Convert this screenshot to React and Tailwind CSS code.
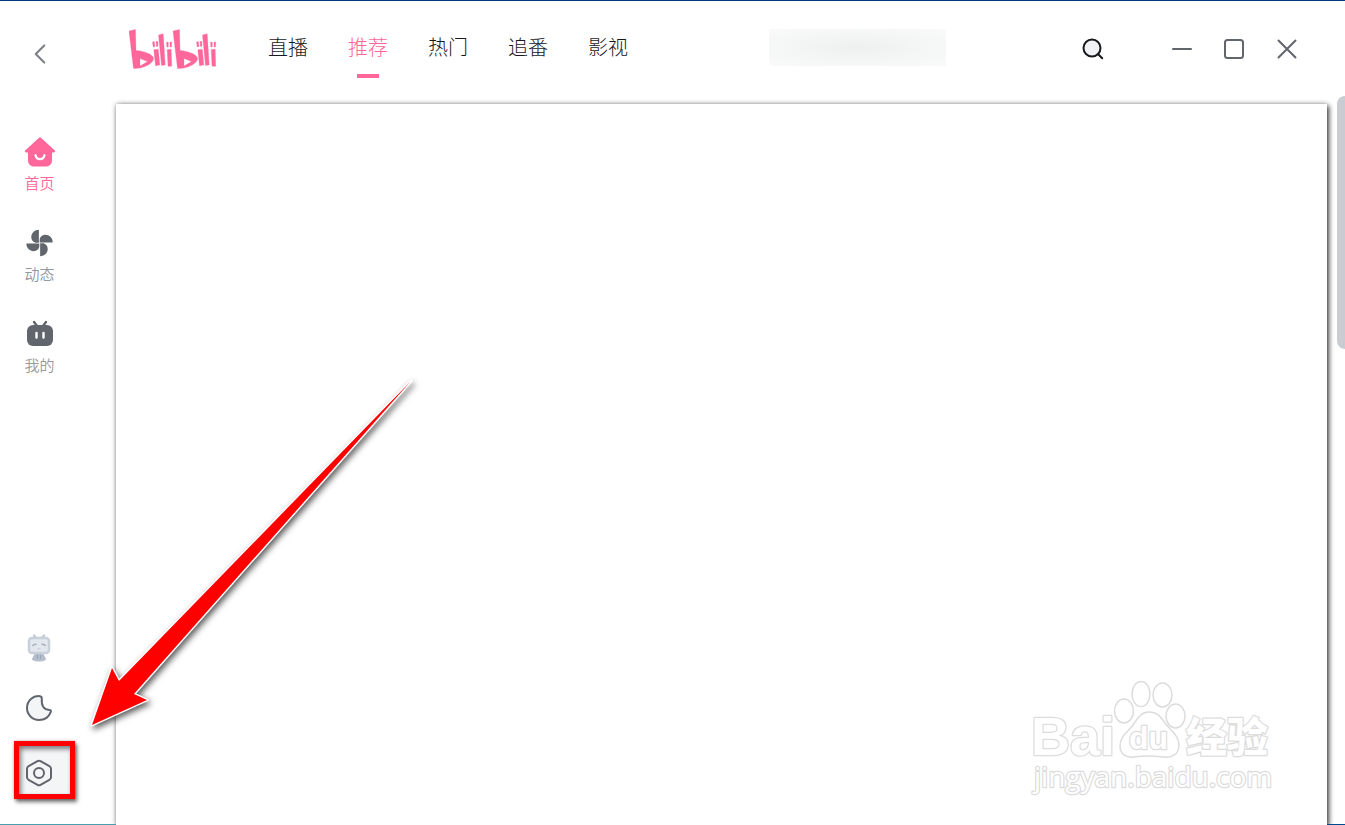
import { useState } from 'react';
import { ChevronLeft } from 'lucide-react';

const TABS = ['直播', '推荐', '热门', '追番', '影视'];

// one half of the wordmark, drawn twice side by side
function LogoHalf() {
  return (
    <g>
      <path
        fillRule="evenodd"
        d="M0 2 6.500 .5 7 21.500C15 22 24.500 25.500 24.500 29.500 24.500 35 13 40 4.500 39.500ZM11 29.500V37L18.500 32.500Z"
      />
      <path d="M23.500 13l1.800-.5.7 5-1.800.4zM27 12.500l1.800-.3.2 5.100-1.600.3z" />
      <path d="M24.800 20.700l4.500-.5 1.500 15.800-4.300.8z" />
      <path d="M29.500 6l4.700-1.200L36.200 36l-3.700.5z" />
      <path d="M37.500 13.200l1.800-.2v5l-1.500.1zM41 13l1.800.1-.3 5-1.500-.1z" />
      <path d="M38.200 20.500l4-.2.5 17-3.700-.1z" />
    </g>
  );
}

function Logo() {
  return (
    <svg
      viewBox="0 0 88 40"
      className="w-[88px] h-10 text-[#ff6699]"
      fill="currentColor"
      stroke="currentColor"
      strokeWidth="0.3"
      role="img"
      aria-label="bilibili"
    >
      <LogoHalf />
      <g transform="translate(44 0)">
        <LogoHalf />
      </g>
    </svg>
  );
}

function HomeIcon() {
  return (
    <svg viewBox="0 0 32 30" className="w-8 h-[30px]" fill="currentColor">
      <path d="M14.500 1.300a2.200 2.200 0 0 1 3 0L30.600 13.200c1 .9.500 2.300-.8 2.300H28V23c0 4-2.300 6.500-6.300 6.500H10.300C6.300 29.500 4 27 4 23v-7.500H2.200c-1.300 0-1.800-1.400-.8-2.300z" />
      <path d="M11.500 18c.4 2.700 2.100 4.200 4.500 4.200s4.100-1.500 4.500-4.200" fill="none" stroke="#fff" strokeWidth="2.200" strokeLinecap="round" />
    </svg>
  );
}

const BLADE = 'M12.900.3C8.500.3 5.300 3.600 5.300 7.500c0 3.200 2.200 5.800 5.200 5.800h2.400z';

function FanIcon() {
  return (
    <svg viewBox="0 0 27 27" className="w-[27px] h-[30px]" fill="currentColor">
      <path d={BLADE} />
      <path d={BLADE} transform="rotate(90 13.500 13.500)" />
      <path d={BLADE} transform="rotate(180 13.500 13.500)" />
      <path d={BLADE} transform="rotate(270 13.500 13.500)" />
    </svg>
  );
}

function TvIcon() {
  return (
    <svg viewBox="0 0 28 30" className="w-7 h-[30px]" fill="currentColor">
      <path d="M8 3l3 4M20 3l-3 4" stroke="currentColor" strokeWidth="2.400" strokeLinecap="round" />
      <rect x="1" y="6" width="26" height="21" rx="6" />
      <path d="M10.500 14v4.500M17.500 14v4.500" stroke="#fff" strokeWidth="2.400" strokeLinecap="round" />
    </svg>
  );
}

function MascotIcon() {
  return (
    <svg viewBox="0 0 24 28" className="w-6 h-7" fill="none">
      <path d="M7 1.500L9.500 4M17 1.500L14.500 4" stroke="#c3cad5" strokeWidth="2.400" strokeLinecap="round" />
      <path d="M8.500 18h7l3.500 7c0 1.500-3 2.500-7 2.500S5 26.500 5 25z" fill="#b3bdcb" />
      <path d="M10.500 21v4M13.500 21v4" stroke="#98a4b5" strokeWidth="1" />
      <rect x="2" y="4" width="20" height="15" rx="3" fill="#e3e8ef" stroke="#c9d0da" strokeWidth="2.500" />
      <path d="M5.500 12c1-1.500 2.500-2 4-1.500M18.500 12c-1-1.500-2.500-2-4-1.500" stroke="#a5afbd" strokeWidth="1.500" />
      <path d="M10.500 14.500l1.500.7 1.500-.7" stroke="#c3cad5" />
    </svg>
  );
}

function MoonIcon() {
  return (
    <svg viewBox="0 0 28 28" className="w-7 h-7" fill="#f4f5f7" stroke="#61666d" strokeWidth="2" strokeLinejoin="round">
      <path d="M15 2.200C8 1.200 2 6.800 2 14a12 12 0 0 0 12 12c5.500 0 10-3.300 11.800-8.200.5-1.200-.3-1.900-1.500-1.900-5.300-.1-8.100-3.900-7.500-11.200.1-1.500-.4-2.300-1.800-2.500z" />
    </svg>
  );
}

function SettingsIcon() {
  return (
    <svg viewBox="0 0 28 28" className="relative w-7 h-7" fill="none" stroke="#61666d" strokeWidth="2" strokeLinejoin="round">
      <path d="M12.500 2.200a3 3 0 0 1 3 0l8.900 4.900a3 3 0 0 1 1.600 2.600v8.600a3 3 0 0 1-1.600 2.600l-8.900 4.900a3 3 0 0 1-3 0l-8.900-4.900A3 3 0 0 1 2 18.300V9.700a3 3 0 0 1 1.600-2.600z" />
      <circle cx="14" cy="14" r="5" />
    </svg>
  );
}

const NAV = [
  { label: '首页', icon: HomeIcon },
  { label: '动态', icon: FanIcon },
  { label: '我的', icon: TvIcon },
];

function Sidebar() {
  const [active, setActive] = useState('首页');

  return (
    <aside className="w-20 shrink-0 pr-px flex flex-col items-center">
      <button aria-label="返回" className="mt-9 text-[#7d8187]">
        <ChevronLeft className="w-[34px] h-[34px]" strokeWidth={1.5} />
      </button>

      <nav className="mt-[66px] flex flex-col gap-[35px]">
        {NAV.map(({ label, icon: Icon }) => (
          <button
            key={label}
            onClick={() => setActive(label)}
            className={`flex flex-col items-center ${active === label ? 'text-[#ff6699]' : 'text-[#61666d]'}`}
          >
            <Icon />
            <span className={`mt-1 text-[15px] leading-6 font-[350] ${active === label ? '' : 'text-[#9499a0]'} -mb-0.5`}>{label}</span>
          </button>
        ))}
      </nav>

      <div className="mt-auto mb-[38px] mr-px flex flex-col items-center gap-8">
        <button aria-label="客服"><MascotIcon /></button>
        <button aria-label="深色模式"><MoonIcon /></button>
        <button aria-label="设置" className="relative mt-[5px]">
          <span className="absolute -left-[11px] -top-[18px] w-[61px] h-[58px] border-5 border-[#ff0000] bg-[#f4f5f7] shadow-[2px_3px_4px_rgba(0,0,0,0.55),0_0_3px_rgba(0,0,0,0.25),inset_2px_3px_5px_rgba(0,0,0,0.5)]" />
          <SettingsIcon />
        </button>
      </div>
    </aside>
  );
}

function Header() {
  const [tab, setTab] = useState('推荐');

  return (
    <header className="h-[103px] shrink-0 flex items-start pl-[49px] pr-12">
      <div className="mt-7">
        <Logo />
      </div>
      <nav className="ml-[51px] mt-8 flex gap-10">
        {TABS.map((name) => (
          <button
            key={name}
            onClick={() => setTab(name)}
            className={`flex flex-col items-center text-xl leading-7 font-light whitespace-nowrap ${tab === name ? 'text-[#ff6699]' : 'text-[#18191c]'}`}
          >
            {name}
            {tab === name && <span className="mt-[13px] w-[22px] h-1 bg-[#ff6699]" />}
          </button>
        ))}
      </nav>
      <div className="ml-auto mt-7 w-[177px] h-[37px] bg-radial from-[#eef0f0] to-[#fafafa]" />
      <div className="ml-[136px] mt-9 flex items-center text-[#61666d]">
        <button aria-label="搜索" className="mr-[68px] text-[#18191c]">
          <svg viewBox="0 0 22 22" className="w-[22px] h-6" fill="none" stroke="currentColor" strokeWidth="2" strokeLinecap="round">
            <circle cx="10" cy="10" r="8.500" fill="#f1f2f5" />
            <path d="M16.200 16.200l4 4" />
          </svg>
        </button>
        <button aria-label="最小化" className="mr-8">
          <svg viewBox="0 0 20 20" className="w-5 h-5" stroke="currentColor" strokeWidth="2" strokeLinecap="round">
            <path d="M1 10h18" />
          </svg>
        </button>
        <button aria-label="最大化" className="mr-[33px]">
          <svg viewBox="0 0 20 20" className="w-5 h-5" fill="none" stroke="currentColor" strokeWidth="2">
            <rect x="1" y="1" width="18" height="18" rx="2.500" />
          </svg>
        </button>
        <button aria-label="关闭">
          <svg viewBox="0 0 20 20" className="w-5 h-5" stroke="currentColor" strokeWidth="2" strokeLinecap="round">
            <path d="M1.500 1.500l17 17M18.500 1.500l-17 17" />
          </svg>
        </button>
      </div>
    </header>
  );
}

function Watermark() {
  return (
    <svg
      viewBox="0 0 250 122"
      className="absolute right-[49px] bottom-[27px] w-[250px] h-[122px]"
      fill="#fff"
      stroke="#dcdcdc"
      strokeWidth="2.500"
      strokeLinejoin="round"
    >
      <ellipse cx="96" cy="35" rx="9.500" ry="12" strokeWidth="1.500" />
      <ellipse cx="113" cy="18" rx="9" ry="12.500" strokeWidth="1.500" />
      <ellipse cx="134.500" cy="19" rx="9.500" ry="12" strokeWidth="1.500" />
      <ellipse cx="147.500" cy="40" rx="9.500" ry="12" strokeWidth="1.500" />
      <path d="M121 36c8 0 11 4 16 11s14 12 14 22-8 13-16 12-21-1-29 0-14-3-14-11c0-10 8-14 13-21s8-13 16-13z" strokeWidth="1.500" />
      <g style={{ paintOrder: 'stroke' }}>
        <text x="3" y="79" className="text-[54px] font-bold font-['Liberation_Sans',sans-serif]">Bai</text>
        <text x="101" y="73" className="text-[32px] font-bold font-['Liberation_Sans',sans-serif]">du</text>
        <text x="158" y="76" className="text-[41px] font-black font-['Noto_Sans_CJK_SC',sans-serif]">经验</text>
        <text x="6" y="111" className="text-[28px] font-['Open_Sans',sans-serif]">jingyan.baidu.com</text>
      </g>
    </svg>
  );
}

function PointerArrow() {
  return (
    <svg
      viewBox="0 0 350 370"
      className="absolute left-20 bottom-[85px] w-[350px] h-[370px] pointer-events-none drop-shadow-[2px_3px_3px_rgba(0,0,0,0.65)]"
    >
      <path
        d="M331 11L39 311 32 298 12 355 67 330 54 324z"
        fill="#ff0000"
        stroke="#fff"
        strokeWidth="3"
        strokeLinejoin="round"
        style={{ paintOrder: 'stroke' }}
      />
    </svg>
  );
}

export default function App() {
  return (
    <div className="relative h-screen flex overflow-hidden bg-white border-t border-[#003a7a] font-['Noto_Sans_CJK_SC',sans-serif]">
      <Sidebar />
      <div className="flex-1 min-w-0 flex flex-col">
        <Header />
        <main className="relative flex-1 ml-9 mr-[18px] bg-white shadow-[2px_2px_5px_rgba(0,0,0,0.7),0_0_5px_rgba(0,0,0,0.3)]">
          <Watermark />
        </main>
      </div>
      <div className="absolute right-0 top-[95px] w-2 h-[253px] rounded-l-full bg-[#c9ccd0]" />
      <div className="absolute left-0 bottom-0 w-[116px] h-px bg-[#4a9fae]" />
      <div className="absolute right-0 bottom-0 w-[18px] h-px bg-[#004a8f]" />
      <PointerArrow />
    </div>
  );
}
